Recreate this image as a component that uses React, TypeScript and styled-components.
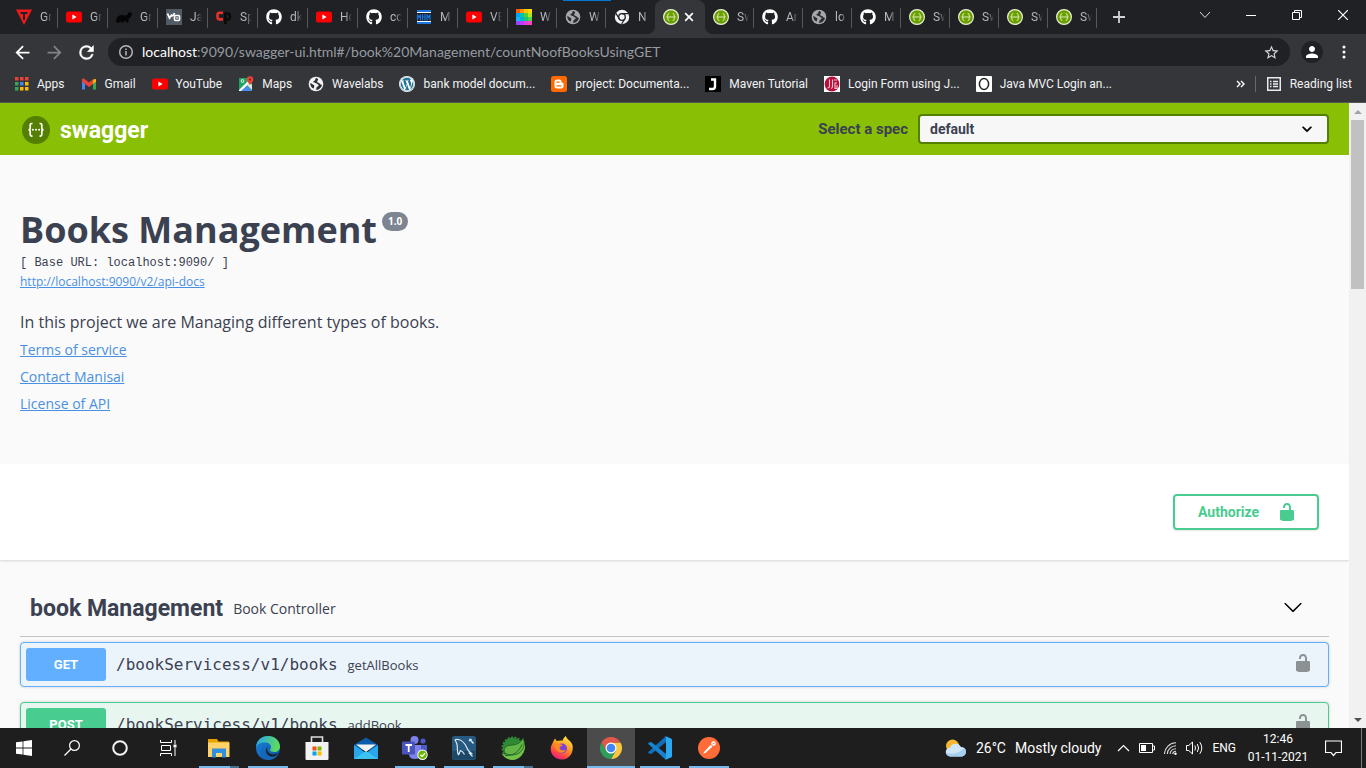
import React from 'react';
import styled, { createGlobalStyle, css } from 'styled-components';
import { FaGithub, FaWordpress } from 'react-icons/fa';

const uiFont = 'Roboto, "Open Sans", sans-serif';
const bodyFont = '"Open Sans", "Noto Sans", sans-serif';
const monoFont = '"DejaVu Sans Mono", "Liberation Mono", monospace';

const GlobalStyle = createGlobalStyle`
  *, *::before, *::after { box-sizing: border-box; }
  body { margin: 0; background: #fafafa; font-family: ${bodyFont}; color: #3b4151; }
  button { font: inherit; color: inherit; background: none; border: 0; padding: 0; cursor: pointer; }
  h1, h2, p, ul { margin: 0; padding: 0; }
  svg { display: block; flex: none; }
`;

/* ---------- Window shell ---------- */

const Desktop = styled.div`
  display: flex;
  flex-direction: column;
  height: 100vh;
  overflow: hidden;
`;

const TabStrip = styled.div`
  display: flex;
  height: 34px;
  padding-left: 8px;
  background: #202124;
  color: #9aa0a6;
  font: 12px/16px ${uiFont};
  position: relative;
`;

const LoadingMark = styled.span`
  position: absolute;
  top: 0;
  left: 563px;
  width: 48px;
  height: 1px;
  background: #0078d7;
`;

const tabWidth = css<{ $wide?: boolean }>`
  flex: none;
  width: ${(p) => (p.$wide ? 50 : 49)}px;
`;

const TabButton = styled.button<{ $wide?: boolean; $line?: boolean }>`
  ${tabWidth}
  display: flex;
  align-items: center;
  gap: 8px;
  height: 34px;
  padding-left: 8px;
  background: ${(p) => (p.$line ? 'linear-gradient(#55575b, #55575b) right 8px / 1px 20px no-repeat' : 'none')};
`;

const TabTitle = styled.span`
  width: 12px;
  overflow: hidden;
  white-space: nowrap;
  text-align: left;
  color: #b5b9be;
  mask-image: linear-gradient(90deg, #000 45%, transparent);
`;

const ActiveTab = styled.div`
  ${tabWidth}
  position: relative;
  display: flex;
  align-items: center;
  gap: 5px;
  padding-left: 8px;
  background: #35363a;
  border-radius: 8px 8px 0 0;
  &::before, &::after {
    content: '';
    position: absolute;
    bottom: 0;
    width: 8px;
    height: 8px;
  }
  &::before { left: -8px; background: radial-gradient(circle at 0 0, transparent 8px, #35363a 8px); }
  &::after { right: -8px; background: radial-gradient(circle at 100% 0, transparent 8px, #35363a 8px); }
`;

const NewTab = styled.button`
  display: grid;
  place-items: center;
  width: 44px;
`;

const WindowControls = styled.div`
  display: flex;
  margin-left: auto;
`;

const WindowButton = styled.button`
  display: grid;
  place-items: center;
  width: 46px;
  height: 29px;
`;

const Toolbar = styled.div`
  display: flex;
  align-items: center;
  height: 36px;
  padding: 0 6px;
  background: #35363a;
`;

const NavButton = styled.button`
  display: grid;
  place-items: center;
  width: 32px;
  height: 28px;
`;

const Omnibox = styled.label`
  display: flex;
  align-items: center;
  flex: 1;
  gap: 8px;
  height: 28px;
  margin: 0 6px;
  padding: 0 10px;
  border-radius: 14px;
  background: #202124;
  font: 14px/20px Lato, ${uiFont};
  color: #969ba1;
  b { font-weight: 400; color: #fff; }
`;

const Address = styled.span`
  flex: 1;
  white-space: nowrap;
`;

const Avatar = styled.span`
  display: grid;
  place-items: center;
  width: 22px;
  height: 22px;
  border-radius: 11px;
  background: #202124;
`;

const Bookmarks = styled.nav`
  display: flex;
  align-items: center;
  gap: 16px;
  height: 33px;
  padding: 0 14px 4px 13px;
  border-bottom: 1px solid #55565a;
  background: #35363a;
  color: #f1f3f4;
  font: 12px/16px ${uiFont};
`;

const Bookmark = styled.a`
  display: flex;
  align-items: center;
  gap: 8px;
  color: inherit;
  text-decoration: none;
  white-space: nowrap;
`;

const BookmarkEnd = styled.div`
  display: flex;
  align-items: center;
  gap: 10px;
  margin-left: auto;
`;

const ReadingList = styled.button`
  display: flex;
  align-items: center;
  gap: 8px;
  padding-left: 10px;
  border-left: 1px solid #67696d;
`;

/* ---------- Page ---------- */

const Viewport = styled.div`
  display: flex;
  flex: 1;
  min-height: 0;
`;

const Page = styled.main`
  flex: 1;
  min-width: 0;
  overflow: hidden;
  background: #fafafa;
`;

const Topbar = styled.header`
  display: flex;
  align-items: center;
  justify-content: space-between;
  height: 52px;
  padding: 0 20px;
  background: #89bf04;
`;

const Brand = styled.a`
  display: flex;
  align-items: flex-end;
  gap: 8px;
  color: #fff;
  font: 700 23px/28px ${uiFont};
  text-decoration: none;
`;

const SpecForm = styled.div`
  display: flex;
  align-items: center;
  gap: 10px;
  color: #3b4151;
  font: 700 15px/20px ${uiFont};
`;

const SelectBox = styled.div`
  position: relative;
  width: 411px;
  svg { position: absolute; right: 12px; top: 5px; pointer-events: none; }
`;

const Select = styled.select`
  display: block;
  width: 100%;
  height: 30px;
  padding: 0 10px;
  border: 2px solid #547f00;
  border-radius: 4px;
  appearance: none;
  background: #f7f7f7;
  color: #3b4151;
  font: 700 14px/20px ${uiFont};
`;

const Info = styled.section`
  padding: 51px 20px 47px;
`;

const Title = styled.h1`
  display: flex;
  align-items: flex-start;
  gap: 5px;
  font-size: 36px;
  font-weight: 700;
  line-height: 48px;
`;

const Version = styled.small`
  margin-top: 6px;
  padding: 0 6px;
  border-radius: 10px;
  background: #7d8492;
  color: #fff;
  font-size: 10px;
  line-height: 19px;
`;

const BaseUrl = styled.pre`
  margin: 0;
  font: 12px/18px "Liberation Mono", monospace;
`;

const DocLink = styled.a<{ $small?: boolean }>`
  display: block;
  width: max-content;
  color: #4990e2;
  font-size: ${(p) => (p.$small ? 12 : 14)}px;
  line-height: ${(p) => (p.$small ? 20 : 27)}px;
`;

const Description = styled.p`
  margin-top: 16px;
  font-size: 16px;
  line-height: 28px;
`;

const Schemes = styled.section`
  display: flex;
  justify-content: flex-end;
  padding: 30px;
  background: #fff;
  box-shadow: 0 1px 2px rgba(0, 0, 0, 0.15);
`;

const Authorize = styled.button`
  display: flex;
  align-items: center;
  justify-content: space-between;
  width: 146px;
  height: 36px;
  padding: 0 20px 0 23px;
  border: 2px solid #49cc90;
  border-radius: 4px;
  box-shadow: 0 1px 2px rgba(0, 0, 0, 0.1);
  color: #49cc90;
  font: 700 14px/20px ${uiFont};
`;

const Operations = styled.section`
  padding: 21px 20px 0;
`;

const TagHeader = styled.div`
  display: flex;
  align-items: center;
  height: 56px;
  margin-bottom: 5px;
  padding: 0 26px 0 10px;
  border-bottom: 1px solid #bfc1c5;
  small { flex: 1; padding: 0 10px; font-size: 14px; line-height: 20px; }
`;

const TagName = styled.h2`
  font: 700 23px/28px ${uiFont};
`;

const Block = styled.article<{ $line: string; $fill: string }>`
  display: flex;
  align-items: center;
  height: 45px;
  margin-bottom: 15px;
  padding: 0 15px 0 5px;
  border: 1px solid ${(p) => p.$line};
  border-radius: 4px;
  background: ${(p) => p.$fill};
  box-shadow: 0 0 3px rgba(0, 0, 0, 0.19);
  white-space: nowrap;
`;

const Method = styled.button<{ $color: string }>`
  width: 80px;
  height: 33px;
  border-radius: 3px;
  background: ${(p) => p.$color};
  color: #fff;
  font: 700 13px/20px ${uiFont};
`;

const Path = styled.span`
  padding: 0 10px;
  font: 16px/24px ${monoFont};
`;

const Summary = styled.span`
  flex: 1;
  font-size: 13px;
  line-height: 20px;
`;

const RowButton = styled.button<{ $color: string }>`
  padding-bottom: 3px;
  color: ${(p) => p.$color};
`;

const ScrollTrack = styled.div`
  display: flex;
  flex-direction: column;
  align-items: center;
  width: 17px;
  background: #f1f1f1;
`;

const ScrollArrow = styled.button<{ $color: string }>`
  display: grid;
  place-items: center;
  width: 17px;
  height: 17px;
  color: ${(p) => p.$color};
`;

const ScrollThumb = styled.div`
  width: 13px;
  height: 27%;
  margin-bottom: auto;
  background: #c1c1c1;
`;

/* ---------- Taskbar ---------- */

const Taskbar = styled.footer`
  display: flex;
  height: 40px;
  background: #1e1e1e;
  color: #fff;
`;

const SystemButtons = styled.div`
  display: flex;
  margin-right: 3px;
`;

const Apps = styled.div`
  display: flex;
  gap: 1px;
`;

const TaskButton = styled.button<{ $state?: 'open' | 'stack' | 'active' }>`
  display: grid;
  place-items: center;
  width: 48px;
  height: 40px;
  ${(p) => p.$state === 'open' && css`background: linear-gradient(#76b9ed, #76b9ed) 4px 38px / 40px 2px no-repeat;`}
  ${(p) => p.$state === 'stack' && css`background: linear-gradient(90deg, #76b9ed 31px, #4a7190 31px) 4px 38px / 40px 2px no-repeat;`}
  ${(p) => p.$state === 'active' && css`background: linear-gradient(#76b9ed, #76b9ed) 0 38px / 48px 2px no-repeat, #4b4b4b;`}
`;

const Tray = styled.div`
  display: flex;
  align-items: center;
  margin-left: auto;
  font: 12px/18px ${uiFont};
`;

const Weather = styled.button`
  display: flex;
  align-items: center;
  gap: 9px;
  margin-right: 16px;
  font: 14px/20px ${uiFont};
`;

const TrayIcons = styled.div`
  display: flex;
  align-items: center;
  gap: 9px;
`;

const Clock = styled.time`
  width: 62px;
  margin: 0 16px 0 11px;
  text-align: center;
`;

const DesktopEdge = styled.div`
  width: 5px;
  height: 40px;
  margin-left: 19px;
  border-left: 1px solid #7a7a7a;
`;

/* ---------- Favicons ---------- */

const YouTube = () => (
  <svg width="16" height="16" viewBox="0 0 16 16">
    <rect y="2.5" width="16" height="11" rx="2.6" fill="#f00" />
    <path d="M6.4 5.6 10.6 8l-4.2 2.4z" fill="#fff" />
  </svg>
);
const Triangle = () => (
  <svg width="16" height="16" viewBox="0 0 16 16">
    <path d="M0 .5h16L8 16z" fill="#f21a1a" />
    <path d="M4.5 3h7v2H9v6H7V5H4.500z" fill="#202124" />
  </svg>
);
const Elephant = () => (
  <svg width="16" height="16" viewBox="0 0 16 16">
    <path d="M0 13.500c0-4 1.500-7 5.500-7.500 2 0 3.500.8 5 .3 1.600-.6 1-2.300 2.500-3 1.800-.6 3.300 1 2.900 2.700-.5 2-2.500 2.500-3.300 4.500l-.4 3h-2l-.5-2c-1 .5-1.700.8-2 2h-2c-.3-1.500-1.200-1.500-1.700 0z" fill="#050505" />
  </svg>
);
const Vogella = () => (
  <svg width="16" height="16" viewBox="0 0 16 16" fill="none" stroke="#fff">
    <rect width="16" height="16" fill="#515b66" stroke="none" />
    <path d="M1.500 4.500 3.500 9 6 5.500M5 6.500q2 1.500 3.500-2.500" strokeWidth="1.800" />
    <rect x="8.500" y="6.500" width="5" height="5" rx="1" strokeWidth="1.600" />
    <path d="M10 9h2" strokeWidth="1" />
  </svg>
);
const CodePoint = () => (
  <svg width="16" height="16" viewBox="0 0 16 16" fill="none" strokeWidth="2.600">
    <path d="M7 3.700H3.600Q1.500 3.700 1.500 6v2q0 2.400 2.100 2.400H7" stroke="#e8312a" />
    <path d="M9.300 15V4.500h2.500q2.200 0 2.200 3t-2.200 3H9.500" stroke="#0a0a0a" />
  </svg>
);
const GitHub = () => <FaGithub size={16} color="#fff" />;
const Mkyong = () => (
  <svg width="16" height="16" viewBox="0 0 16 16">
    <path d="M1 1h14v2H1zM1 13h14v2H1z" fill="#1976e0" />
    <path d="M1 3.500h14M1 12.500h14" stroke="#fff" />
    <path d="M1.500 11.500v-6l1.500 3 1.500-3v6M6.500 5v6.500M9 5v6.500M6.500 8H9M11 11.500v-6l1.500 3 1.500-3v6" stroke="#1976e0" strokeWidth="1.200" fill="none" />
  </svg>
);
const swatches = ['#ff5a00', '#ff9000', '#ffc400', '#ffd900', '#00a2ff', '#00c8a0', '#4cd137', '#b4e61e', '#18b4ff', '#00b0d0', '#14c878', '#50d050', '#a040ff', '#c03cff', '#e040e0', '#ff40c0'];
const Swatches = () => (
  <svg width="16" height="16" viewBox="0 0 16 16">
    {swatches.map((c, i) => <rect key={c} x={(i % 4) * 4} y={Math.floor(i / 4) * 4} width="4" height="4" fill={c} />)}
  </svg>
);
const Globe = ({ color = '#a5a9ad' }: { color?: string }) => (
  <svg width="16" height="16" viewBox="0 0 16 16">
    <circle cx="8" cy="8" r="7.300" fill={color} />
    <path d="M8.600 2c-1 .2-1.500.8-1.300 1.600.2.700-.3 1-1 1.100-.9.100-1 .7-.8 1.400.3.800 1.200.8 2 .8 1.200 0 1.300 1 2.200 1.300 1 .2 1.200 1 .6 1.800-.5.700-1.700.6-1.800 1.700 0 .9-.3 1.600-.9 2 3.300.3 6-2 6.300-5-1.200.3-1.800-.5-2.500-1.400-.6-.8-1.800-.6-2.200-1.400-.3-.9.800-1.200.9-2.100.1-.8-.6-1.200-1.500-1.800zM2.300 7c-.3 2.500 1.200 4.700 3.200 5.600.7-.7.200-1.400.7-2.200.4-.8-.1-1.500-1-1.700C4 8.400 3.600 7 2.300 7z" fill="#2b2c30" />
  </svg>
);
const ChromeMono = () => (
  <svg width="16" height="16" viewBox="0 0 16 16" fill="none">
    <circle cx="8" cy="8" r="7.200" fill="#f1f3f4" />
    <circle cx="8" cy="8" r="3.300" stroke="#202124" strokeWidth="1.300" />
    <path d="M8 4.700h6.500M5.200 9.700 2 4.400M10.800 9.700 7.700 15" stroke="#202124" strokeWidth="1.200" />
  </svg>
);
const SwaggerIcon = () => (
  <svg width="16" height="16" viewBox="0 0 16 16" fill="none">
    <circle cx="8" cy="8" r="7.400" fill="#6a9f00" stroke="#e8f0d8" strokeWidth="1.200" />
    <path d="M6.300 4.500q-1.500 0-1.500 1.500v1q0 1-1.200 1 1.200 0 1.200 1v1q0 1.500 1.500 1.500M9.700 4.500q1.500 0 1.500 1.500v1q0 1 1.200 1-1.200 0-1.200 1v1q0 1.500-1.500 1.500M5 8h6" stroke="#dcebb8" />
  </svg>
);
const AppsIcon = () => {
  const colors = ['#ea4335', '#ea4335', '#ea4335', '#34a853', '#4285f4', '#fbbc05', '#34a853', '#fbbc05', '#fbbc05'];
  return (
    <svg width="16" height="16" viewBox="0 0 16 16">
      {colors.map((c, i) => <rect key={i} x={2 + (i % 3) * 5} y={1 + Math.floor(i / 3) * 5} width="3.500" height="3.500" fill={c} />)}
    </svg>
  );
};
const Gmail = () => (
  <svg width="16" height="16" viewBox="0 0 16 16">
    <path d="M1 4v9.500h3V7z" fill="#4285f4" />
    <path d="M15 4v9.500h-3V7z" fill="#34a853" />
    <path d="M12 3.500 15 3v2.500l-3 2.500z" fill="#fbbc04" />
    <path d="M1 5.500V4c0-1.500 1.500-1.800 2.500-1L8 6.500 12.500 3 12 8l-4 3-4-3z" fill="#ea4335" />
  </svg>
);
const Maps = () => (
  <svg width="16" height="16" viewBox="0 0 16 16">
    <path d="M1 2h13v13H1z" fill="#1ea362" />
    <path d="m2 15 6-6 6 6z" fill="#4a89f3" />
    <path d="m1 14 9-9 1.500 2L3 15H1z" fill="#fff" />
    <path d="m9 9 5 5V9l-2-2z" fill="#e5e5e5" />
    <circle cx="4.500" cy="5" r="1.800" fill="#fff" />
    <circle cx="4.500" cy="5" r="1" fill="#1ea362" />
    <path d="M12 9.500C12 7.500 8.800 6.500 8.800 3.500a3.200 3.200 0 0 1 6.400 0C15.200 6.500 12 7.500 12 9.500z" fill="#ea4335" />
    <circle cx="12" cy="3.500" r="1.100" fill="#8b1a1a" />
  </svg>
);
const WordPress = () => (
  <svg width="16" height="16" viewBox="0 0 16 16">
    <circle cx="8" cy="8" r="8" fill="#fff" />
    <FaWordpress x="0.5" y="0.5" size={15} color="#21759b" />
  </svg>
);
const Blogger = () => (
  <svg width="16" height="16" viewBox="0 0 16 16">
    <rect width="16" height="16" rx="2.500" fill="#ff6a00" />
    <path d="M6 3.500h2.300q2.200 0 2.200 2.300 0 1 1 1t1 1V10q0 2.500-2.500 2.500H6Q3.500 12.500 3.500 10V6Q3.500 3.500 6 3.500z" fill="#fff" />
    <path d="M6 6.200h2M6 9.800h4" stroke="#ff6a00" strokeWidth="1.300" strokeLinecap="round" />
  </svg>
);
const JavaPoint = () => (
  <svg width="16" height="16" viewBox="0 0 16 16">
    <path d="M0 0h16v16H0z" fill="#000" />
    <path d="M6 3.500h4v7q0 2.500-2.500 2.500H4" stroke="#fff" strokeWidth="2.400" fill="none" />
  </svg>
);
const Guides = () => (
  <svg width="16" height="16" viewBox="0 0 16 16" fill="none">
    <path d="M0 0h16v16H0z" fill="#fff" />
    <circle cx="8" cy="8" r="7.400" fill="#b80f3a" />
    <path d="M5.500 3.500v7q0 1.500-2 1.500M8.500 3.500v7q0 1.500-1.500 2M10 4h3M13 7h-2v5.500h2V9" stroke="#f3c9d3" strokeWidth="1.100" />
  </svg>
);
const OracleO = () => (
  <svg width="16" height="16" viewBox="0 0 16 16" fill="none">
    <rect width="16" height="16" rx="1" fill="#fff" />
    <ellipse cx="8" cy="8" rx="4.600" ry="5.500" stroke="#222" strokeWidth="1.500" />
  </svg>
);

const leftTabs: [string, () => React.ReactElement][] = [
  ['Gr', Triangle], ['Gr', YouTube], ['Gr', Elephant], ['Ja', Vogella], ['Sp', CodePoint], ['dk', GitHub],
  ['Ho', YouTube], ['cc', GitHub], ['M', Mkyong], ['VE', YouTube], ['W', Swatches], ['W', Globe], ['N', ChromeMono],
];
const rightTabs: [string, () => React.ReactElement][] = [
  ['Sw', SwaggerIcon], ['An', GitHub], ['lo', Globe], ['M', GitHub],
  ['Sw', SwaggerIcon], ['Sw', SwaggerIcon], ['Sw', SwaggerIcon], ['Sw', SwaggerIcon],
];
const bookmarks: [string, React.ReactElement][] = [
  ['Apps', <AppsIcon />], ['Gmail', <Gmail />], ['YouTube', <YouTube />], ['Maps', <Maps />], ['Wavelabs', <Globe color="#f1f3f4" />],
  ['bank model docum...', <WordPress />], ['project: Documenta...', <Blogger />], ['Maven Tutorial', <JavaPoint />],
  ['Login Form using J...', <Guides />], ['Java MVC Login an...', <OracleO />],
];

const UnlockIcon = () => (
  <svg width="20" height="20" viewBox="0 0 20 20" fill="currentColor">
    <path d="M15.8 8H14V5.600C14 2.703 12.665 1 10 1 7.334 1 6 2.703 6 5.600V6h2v-.801C8 3.754 8.797 3 10 3c1.203 0 2 .754 2 2.199V8H4c-.553 0-1 .646-1 1.199V17c0 .549.428 1.139.951 1.307l1.197.387C5.672 18.861 6.550 19 7.100 19h5.800c.549 0 1.428-.139 1.951-.307l1.196-.387c.524-.167.953-.757.953-1.306V9.199C17 8.646 16.352 8 15.8 8z" />
  </svg>
);

/* ---------- Taskbar icons ---------- */

const WindowsLogo = () => (
  <svg width="16" height="16" viewBox="0 0 16 16" fill="#fff">
    <path d="M0 2.300 6.600 1.400v6.200H0zM7.400 1.300 16 0v7.600H7.400zM0 8.400h6.600v6.200L0 13.700zM7.400 8.400H16V16l-8.600-1.200z" />
  </svg>
);
const Explorer = () => (
  <svg width="24" height="24" viewBox="0 0 24 24">
    <path d="M1 3h9l1.500 2.500H22V21H1z" fill="#e8a200" />
    <path d="M1 6.500h21.500V21H1z" fill="#ffd367" />
    <path d="M5 12.500h14v9h-4V17H9v4.500H5z" fill="#2f8fe0" />
  </svg>
);
const Edge = () => (
  <svg width="24" height="24" viewBox="0 0 24 24">
    <defs>
      <linearGradient id="edgeTop" x1="0" x2="1" y1="0.2" y2="0.4"><stop stopColor="#2aa7e8" /><stop offset="1" stopColor="#5fdc5a" /></linearGradient>
      <linearGradient id="edgeLow" x1="0" x2="1" y1="0" y2="1"><stop stopColor="#1a86dd" /><stop offset="1" stopColor="#0c4fa0" /></linearGradient>
    </defs>
    <circle cx="12" cy="12" r="12" fill="url(#edgeLow)" />
    <path d="M0 11C.5 4.500 5.500 0 12 0c7 0 12 5 12 10.500 0 3.500-2.500 5.500-5.500 5.500-2.500 0-4.500-.8-4.500-2 0-.7 1-1.200 1-3C15 8.500 12.500 6.500 9 6.500 4.500 6.500 1 8.500 0 11z" fill="url(#edgeTop)" />
    <path d="M8.500 10.500C6 14 9 21 15.500 21c3 0 5-1 6.500-2.500-1.500 3-5.500 5.500-10 5.500-4-1-7.500-5-7-8.500.2-2.500 2-4.400 3.500-5z" fill="#1667b8" />
    <path d="M12.500 10.500c-2 1.500-2 4.500.5 6.500s6.500 2 9.500-.2c-2 3.700-6.500 4.500-9.700 2.700-3.300-2-4.300-7-.3-9z" fill="#1e1e1e" />
  </svg>
);
const Store = () => (
  <svg width="24" height="26" viewBox="0 0 24 26">
    <path d="M6.500 8V2h11v6" fill="none" stroke="#ddd" strokeWidth="1.600" />
    <path d="M.5 7h23v17q0 1-1 1h-21q-1 0-1-1z" fill="#f3f3f3" />
    <path d="M7.500 11.500h4v4h-4z" fill="#f25022" /><path d="M12.500 11.500h4v4h-4z" fill="#7fba00" />
    <path d="M7.500 16.500h4v4h-4z" fill="#00a4ef" /><path d="M12.500 16.500h4v4h-4z" fill="#ffb900" />
  </svg>
);
const Mail = () => (
  <svg width="24" height="24" viewBox="0 0 24 24">
    <path d="m0 9 12-7.500L24 9v5H0z" fill="#0a5cad" />
    <path d="M2 8.500h20L12 16z" fill="#f4f4f4" />
    <path d="M0 9v14h24V9L12 17z" fill="#28a8ea" />
    <path d="m0 23 12-8 12 8z" fill="#3cc3f2" />
  </svg>
);
const Teams = () => (
  <svg width="26" height="24" viewBox="0 0 26 24">
    <circle cx="12.500" cy="4" r="4" fill="#7b83eb" /><circle cx="21" cy="5" r="2.600" fill="#5059c9" />
    <path d="M16 9h9v7q0 4-4 4t-5-2z" fill="#5059c9" />
    <path d="M7 9h12v8q0 6-6 6t-6-5z" fill="#7b83eb" />
    <rect y="5.500" width="13" height="13" rx="1" fill="#4b53bc" />
    <path d="M3.500 9h6.500M6.700 9v7" stroke="#fff" strokeWidth="1.800" />
    <circle cx="20.500" cy="18.700" r="5.200" fill="#fff" /><circle cx="20.500" cy="18.700" r="4.300" fill="#6bb700" />
    <path d="m18.300 18.700 1.700 1.700 3-3.200" stroke="#fff" strokeWidth="1.300" fill="none" />
  </svg>
);
const Workbench = () => (
  <svg width="24" height="24" viewBox="0 0 24 24" fill="none">
    <rect width="24" height="24" rx="2.500" fill="#265a80" />
    <path d="M.5 15h23v6.500q0 2-2 2h-19q-2 0-2-2z" fill="#1c4767" />
    <path d="M6.500 19C4.500 15 6 13 5 8.500 4.500 6 2.500 4 3.500 3.500 8 2.500 12.500 6 15 12c1 3 3 4 4.500 5.500l-2-.2 3 3.200M6.500 19l2-4.500c2 .5 3 2 4 4" stroke="#dbe8f2" strokeWidth="1.200" />
    <path d="m17.500 3 4 4.500M17 5l2.500-2" stroke="#dbe8f2" strokeWidth="1.500" />
  </svg>
);
const Spring = () => (
  <svg width="24" height="24" viewBox="0 0 24 24">
    <circle cx="12" cy="12" r="10.300" fill="#2f8a33" stroke="#2f8a33" strokeWidth="2.400" strokeDasharray="2 1.300" />
    <path d="M24 8c1 8-5 16-12.500 16C6 24 2 21 .5 17 2 18.500 7 19.500 12 18z" fill="#72c24a" />
    <path d="M22 2c.5 1 1 2.500 1.300 4.500C23.500 14 18 19 11 19c-3 0-5.500-.8-7.500-2.500C2 12.500 5 9.500 9.500 9.200 14.500 9 20 7.500 22 2z" fill="#62b544" stroke="#1d5c24" strokeWidth=".8" />
    <path d="M4 19.500c8 .5 13.500-3 17-11" stroke="#1d5c24" strokeWidth=".9" fill="none" />
  </svg>
);
const Firefox = () => (
  <svg width="24" height="24" viewBox="0 0 24 24">
    <defs><linearGradient id="fox" x1=".8" x2=".3" y1="0" y2="1"><stop stopColor="#fff04a" /><stop offset=".45" stopColor="#ff9a1f" /><stop offset=".8" stopColor="#ff3f4a" /><stop offset="1" stopColor="#e5208a" /></linearGradient></defs>
    <path d="M3.500 5c.5-1.300 1-2 2-2.500 0 1.300.5 2 1.500 2.500 2-.7 4-.8 5.500-.2C13 2.500 14.500 1 16 0c0 3 5 4.500 6.500 9 1.500 7-3 14.500-10.500 14.500S.5 18 .7 12.500C.8 9.500 2.500 8 3.500 5z" fill="url(#fox)" />
    <circle cx="12" cy="12.500" r="5" fill="#7a44d8" />
    <path d="M5 8.500c3-1.500 4.500 0 7.500.5-.5 1.800-3 1.300-3 3 .5 2.500 4 3 6.500 2-1.500 3-5.500 3.500-8 1.500C6 14 4.500 11 5 8.500z" fill="#ff8a1f" />
  </svg>
);
const Chrome = () => (
  <svg width="24" height="24" viewBox="0 0 24 24">
    <path d="M21.530 6.500A11 11 0 0 1 12 23l4.760-8.250L12 6.500z" fill="#fbc740" />
    <path d="M12 23A11 11 0 0 1 2.470 6.500l4.770 8.250h9.520z" fill="#2e9e5b" />
    <path d="M12 6.500h9.530a11 11 0 0 0-19.060 0l4.770 8.250z" fill="#e2574c" />
    <circle cx="12" cy="12" r="5.500" fill="#fff" /><circle cx="12" cy="12" r="4.300" fill="#4285f4" />
  </svg>
);
const VSCode = () => (
  <svg width="24" height="24" viewBox="0 0 24 24">
    <path d="M18 0v6L4 17.500 1.500 18 0 16.300z" fill="#0f6fb8" />
    <path d="M18 24v-6L4 6.500 1.500 6 0 7.700z" fill="#1583cf" />
    <path d="m17 0 6 2.500q1 .5 1 1.500v16q0 1-1 1.500L17 24q1-.5 1-1.500v-21Q18 .5 17 0z" fill="#2aa8f2" />
  </svg>
);
const Postman = () => (
  <svg width="24" height="24" viewBox="0 0 24 24">
    <circle cx="12" cy="12" r="11" fill="#ff6c37" />
    <path d="m6 18 1.500-2.500 6-6.500 2 1.500-6.500 6z" fill="#fff" />
    <circle cx="16.500" cy="7.500" r="2.300" fill="#fff" /><path d="m15.500 8 2-1" stroke="#ff6c37" />
  </svg>
);
const WeatherIcon = () => (
  <svg width="22" height="18" viewBox="0 0 22 18">
    <circle cx="7.500" cy="7" r="6.500" fill="#f9b630" />
    <path d="M5.500 17.500a4.500 4.500 0 0 1-.5-9 6 6 0 0 1 11-.5 4.800 4.800 0 0 1 1 9.500z" fill="#cfe6f8" />
    <path d="M5.500 17.500a4.500 4.500 0 0 1-4.300-4c6 2.500 13 1 18-4.500a4.800 4.800 0 0 1-2.200 8.500z" fill="#a7cff0" />
  </svg>
);

const operations = [
  { method: 'GET', path: '/bookServicess/v1/books', summary: 'getAllBooks', color: '#61affe', fill: '#ebf3fb' },
  { method: 'POST', path: '/bookServicess/v1/books', summary: 'addBook', color: '#49cc90', fill: '#e8f6f0' },
];

function BrowserTabs() {
  return (
    <TabStrip>
      {leftTabs.map(([name, Icon], i) => (
        <TabButton key={i} $wide={i < 10} $line={i < leftTabs.length - 1}><Icon /><TabTitle>{name}</TabTitle></TabButton>
      ))}
      <ActiveTab $wide>
        <SwaggerIcon />
        <button aria-label="Close tab">
          <svg width="10" height="10" viewBox="0 0 10 10"><path d="m1.200 1.200 7.600 7.600M8.800 1.200 1.200 8.800" stroke="#fff" strokeWidth="1.700" /></svg>
        </button>
      </ActiveTab>
      {rightTabs.map(([name, Icon], i) => (
        <TabButton key={i} $line><Icon /><TabTitle>{name}</TabTitle></TabButton>
      ))}
      <NewTab aria-label="New tab">
        <svg width="12" height="12" viewBox="0 0 12 12"><path d="M6 0v12M0 6h12" stroke="#d0d2d5" strokeWidth="1.800" /></svg>
      </NewTab>
      <WindowControls>
        <WindowButton aria-label="Search tabs"><svg width="12" height="12" fill="none"><path d="m1 3 5 5.500L11 3" stroke="#ddd" /></svg></WindowButton>
        <WindowButton aria-label="Minimize"><svg width="10" height="10"><path d="M0 5.500h10" stroke="#fff" /></svg></WindowButton>
        <WindowButton aria-label="Restore"><svg width="10" height="10" fill="none" stroke="#fff"><path d="M.5 2.500h7v7h-7zM2.500 2.500v-2h7v7h-2" /></svg></WindowButton>
        <WindowButton aria-label="Close"><svg width="10" height="10"><path d="m0 0 10 10M10 0 0 10" stroke="#fff" strokeWidth="1.200" /></svg></WindowButton>
      </WindowControls>
      <LoadingMark />
    </TabStrip>
  );
}

function BrowserToolbar() {
  return (
    <Toolbar>
      <NavButton aria-label="Back"><svg width="21" height="21" viewBox="0 0 24 24" fill="#fff"><path d="M20 11H7.830l5.590-5.590L12 4l-8 8 8 8 1.410-1.410L7.830 13H20v-2z" /></svg></NavButton>
      <NavButton aria-label="Forward"><svg width="21" height="21" viewBox="0 0 24 24" fill="#818387"><path d="M4 11h12.170l-5.590-5.590L12 4l8 8-8 8-1.410-1.410L16.170 13H4v-2z" /></svg></NavButton>
      <NavButton aria-label="Reload"><svg width="21" height="21" viewBox="0 0 24 24" fill="#fff" stroke="#fff" strokeWidth=".5"><path d="M17.650 6.350A7.958 7.958 0 0 0 12 4a8 8 0 1 0 7.730 10h-2.080A6 6 0 1 1 12 6c1.660 0 3.140.69 4.220 1.780L13 11h7V4l-2.350 2.350z" /></svg></NavButton>
      <Omnibox>
        <svg width="16" height="16" viewBox="0 0 16 16" fill="none" stroke="#b4b7bb" strokeWidth="1.500"><circle cx="8" cy="8" r="6.300" /><path d="M8 7v4.500M8 4.500V6" /></svg>
        <Address><b>localhost</b>:9090/swagger-ui.html#/book%20Management/countNoofBooksUsingGET</Address>
        <svg width="17" height="17" viewBox="0 0 24 24" fill="#d5d7da"><path d="M22 9.240l-7.190-.62L12 2 9.190 8.630 2 9.240l5.460 4.730L5.820 21 12 17.270 18.180 21l-1.630-7.030L22 9.240zM12 15.400l-3.760 2.270 1-4.280-3.320-2.880 4.380-.38L12 6.100l1.710 4.040 4.380.38-3.320 2.880 1 4.280L12 15.400z" /></svg>
      </Omnibox>
      <NavButton aria-label="Profile">
        <Avatar><svg width="18" height="18" viewBox="0 0 24 24" fill="#fff"><path d="M12 12c2.210 0 4-1.790 4-4s-1.790-4-4-4-4 1.790-4 4 1.790 4 4 4zm0 2c-2.670 0-8 1.340-8 4v2h16v-2c0-2.660-5.330-4-8-4z" /></svg></Avatar>
      </NavButton>
      <NavButton aria-label="Menu"><svg width="4" height="14" viewBox="0 0 4 14" fill="#fff"><circle cx="2" cy="2" r="1.500" /><circle cx="2" cy="7" r="1.500" /><circle cx="2" cy="12" r="1.500" /></svg></NavButton>
    </Toolbar>
  );
}

export default function App() {
  return (
    <Desktop>
      <GlobalStyle />
      <BrowserTabs />
      <BrowserToolbar />
      <Bookmarks>
        {bookmarks.map(([name, icon]) => <Bookmark key={name} href="#">{icon}{name}</Bookmark>)}
        <BookmarkEnd>
          <button aria-label="More bookmarks"><svg width="9" height="8" viewBox="0 0 9 8" fill="none"><path d="m1 1 3 3-3 3M5 1l3 3-3 3" stroke="#fff" strokeWidth="1.400" /></svg></button>
          <ReadingList>
            <svg width="16" height="16" viewBox="0 0 16 16" fill="none" stroke="#e8eaed"><rect x="1.750" y="1.750" width="12.500" height="12.500" strokeWidth="1.500" /><path d="M4 5.500h1.500M7 5.500h5M4 8h1.500M7 8h5M4 10.500h1.500M7 10.500h5" strokeWidth="1.300" /></svg>
            Reading list
          </ReadingList>
        </BookmarkEnd>
      </Bookmarks>

      <Viewport>
        <Page>
          <Topbar>
            <Brand href="#">
              <svg width="32" height="32" viewBox="0 0 32 32" fill="none">
                <circle cx="16" cy="17" r="14" fill="#547f00" />
                <path d="M12.500 10.500h-.8q-1.500 0-1.500 1.600v3q0 1.700-1.700 1.700 1.700 0 1.700 1.700v3q0 1.600 1.500 1.600h.8M19.500 10.500h.8q1.500 0 1.500 1.600v3q0 1.700 1.700 1.700-1.700 0-1.700 1.700v3q0 1.600-1.500 1.600h-.8" stroke="#fff" strokeWidth="1.700" />
                <circle cx="12.900" cy="16.800" r="1" fill="#fff" /><circle cx="16" cy="16.800" r="1" fill="#fff" /><circle cx="19.100" cy="16.800" r="1" fill="#fff" />
              </svg>
              swagger
            </Brand>
            <SpecForm>
              <label htmlFor="spec">Select a spec</label>
              <SelectBox>
                <Select id="spec" defaultValue="default"><option>default</option></Select>
                <svg width="20" height="20" viewBox="0 0 20 20" stroke="#000" strokeWidth=".4"><path d="M13.418 7.859c.271-.268.709-.268.978 0 .27.268.272.701 0 .969l-3.908 3.830c-.27.268-.707.268-.979 0l-3.908-3.830c-.27-.267-.27-.701 0-.969.271-.268.709-.268.978 0L10 11l3.418-3.141z" /></svg>
              </SelectBox>
            </SpecForm>
          </Topbar>

          <Info>
            <Title>Books Management<Version>1.0</Version></Title>
            <BaseUrl>[ Base URL: localhost:9090/ ]</BaseUrl>
            <DocLink $small href="#">http://localhost:9090/v2/api-docs</DocLink>
            <Description>In this project we are Managing different types of books.</Description>
            <DocLink href="#">Terms of service</DocLink>
            <DocLink href="#">Contact Manisai</DocLink>
            <DocLink href="#">License of API</DocLink>
          </Info>

          <Schemes><Authorize>Authorize<UnlockIcon /></Authorize></Schemes>

          <Operations>
            <TagHeader>
              <TagName>book Management</TagName>
              <small>Book Controller</small>
              <RowButton $color="#000" aria-label="Collapse operations">
                <svg width="20" height="20" viewBox="0 0 20 20" fill="currentColor"><path d="M17.418 6.109c.272-.268.709-.268.979 0s.271.701 0 .969l-7.908 7.830c-.27.268-.707.268-.979 0l-7.908-7.830c-.27-.268-.27-.701 0-.969.271-.268.709-.268.979 0L10 13.250l7.418-7.141z" /></svg>
              </RowButton>
            </TagHeader>
            {operations.map((op) => (
              <Block key={op.method} $line={op.color} $fill={op.fill}>
                <Method $color={op.color}>{op.method}</Method>
                <Path>{op.path}</Path>
                <Summary>{op.summary}</Summary>
                <RowButton $color="#8c9194" aria-label="Authorization"><UnlockIcon /></RowButton>
              </Block>
            ))}
          </Operations>
        </Page>
        <ScrollTrack>
          <ScrollArrow aria-label="Scroll up" $color="#a3a3a3"><svg width="8" height="4" fill="currentColor"><path d="m0 4 4-4 4 4z" /></svg></ScrollArrow>
          <ScrollThumb />
          <ScrollArrow aria-label="Scroll down" $color="#505050"><svg width="8" height="4" fill="currentColor"><path d="m0 0 4 4 4-4z" /></svg></ScrollArrow>
        </ScrollTrack>
      </Viewport>

      <Taskbar>
        <SystemButtons>
          <TaskButton aria-label="Start"><WindowsLogo /></TaskButton>
          <TaskButton aria-label="Search"><svg width="16" height="16" viewBox="0 0 16 16" fill="none" stroke="#fff" strokeWidth="1.200"><circle cx="10.500" cy="5.500" r="4.900" /><path d="M7 9 .5 15.500" /></svg></TaskButton>
          <TaskButton aria-label="Cortana"><svg width="16" height="16" viewBox="0 0 16 16" fill="none"><circle cx="8" cy="8" r="6.800" stroke="#f2f2f2" strokeWidth="2" /></svg></TaskButton>
          <TaskButton aria-label="Task view"><svg width="17" height="16" viewBox="0 0 17 16" fill="none" stroke="#fff"><path d="M.5 0v2.500h11V0M1.500 5.500h9v5h-9zM.5 16v-2.500h11V16M15 0v4M15 8v8" /><path d="M13.500 4.500h3v3h-3z" fill="#fff" stroke="none" /></svg></TaskButton>
        </SystemButtons>
        <Apps>
          <TaskButton $state="stack" aria-label="File Explorer"><Explorer /></TaskButton>
          <TaskButton $state="open" aria-label="Edge"><Edge /></TaskButton>
          <TaskButton aria-label="Store"><Store /></TaskButton>
          <TaskButton aria-label="Mail"><Mail /></TaskButton>
          <TaskButton $state="open" aria-label="Teams"><Teams /></TaskButton>
          <TaskButton $state="open" aria-label="MySQL Workbench"><Workbench /></TaskButton>
          <TaskButton $state="stack" aria-label="Spring Tools"><Spring /></TaskButton>
          <TaskButton aria-label="Firefox"><Firefox /></TaskButton>
          <TaskButton $state="active" aria-label="Chrome"><Chrome /></TaskButton>
          <TaskButton $state="open" aria-label="Visual Studio Code"><VSCode /></TaskButton>
          <TaskButton $state="open" aria-label="Postman"><Postman /></TaskButton>
        </Apps>
        <Tray>
          <Weather><WeatherIcon /><span>26°C</span><span>Mostly cloudy</span></Weather>
          <TrayIcons>
            <svg width="13" height="8" viewBox="0 0 13 8" fill="none"><path d="m1 7 5.500-5.500L12 7" stroke="#fff" strokeWidth="1.200" /></svg>
            <svg width="16" height="10" viewBox="0 0 16 10" fill="none"><path d="M.5.500h13v9H.5zM14 3h1.500v4H14" stroke="#fff" /><path d="M2 2h5v6H2z" fill="#fff" /></svg>
            <svg width="13" height="13" viewBox="0 0 13 13" fill="none" stroke="#ddd" strokeWidth="1.100"><path d="M.5 12A11.500 11.500 0 0 1 12 .8M3.300 12A8.700 8.700 0 0 1 12 3.800M6 12a6 6 0 0 1 6-5.300M8.600 12A3.500 3.500 0 0 1 12 9.300" /><circle cx="11.500" cy="11.700" r="1.200" fill="#fff" stroke="none" /></svg>
            <svg width="17" height="14" viewBox="0 0 17 14" fill="none" stroke="#fff"><path d="M.5 4.500h2.300L6.500 1v12L2.800 9.500H.5zM8.800 4.500q1.500 2.500 0 5M11.300 3q2.600 4 0 8M13.800 1.200q4 5.800 0 11.600" /></svg>
            <span>ENG</span>
          </TrayIcons>
          <Clock>12:46<br />01-11-2021</Clock>
          <svg width="17" height="17" viewBox="0 0 17 17" fill="none"><path d="M.5 1h16v11.500H11L8.500 15.500 6 12.500H.5z" stroke="#fff" strokeWidth="1.200" /></svg>
          <DesktopEdge />
        </Tray>
      </Taskbar>
    </Desktop>
  );
}
